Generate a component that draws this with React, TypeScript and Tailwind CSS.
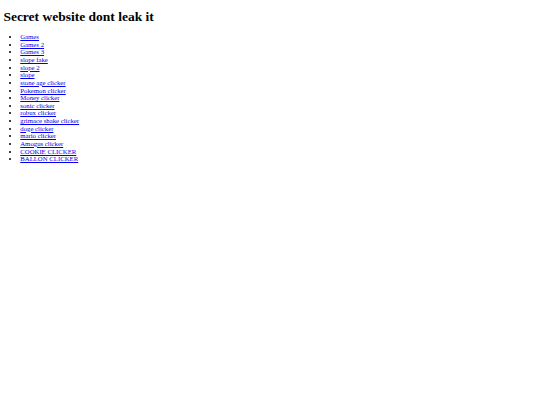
const LINKS = [
  "Games",
  "Games 2",
  "Games 3",
  "slope fake",
  "slope 2",
  "slope",
  "stone age clicker",
  "Pokemon clicker",
  "Money clicker",
  "sonic clicker",
  "robux clicker",
  "grimace shake clicker",
  "doge clicker",
  "mario clicker",
  "Amogus clicker",
  "COOKIE CLICKER",
  "BALLON CLICKER",
];

export default function App() {
  return (
    <div className="min-h-[405px] bg-white p-[3.375px] font-['Liberation_Serif','Times_New_Roman',serif] text-black">
      <h1 className="mt-[5.6px] mb-[8.7px] text-[13.5px] font-bold leading-[15.5px]">
        Secret website dont leak it
      </h1>
      <ul className="my-0 list-disc pl-[16.875px] text-[6.75px] leading-[7.625px]">
        {LINKS.map((label) => (
          <li key={label}>
            <a href="#" className="text-[#0000ee] underline">
              {label}
            </a>
          </li>
        ))}
      </ul>
    </div>
  );
}
